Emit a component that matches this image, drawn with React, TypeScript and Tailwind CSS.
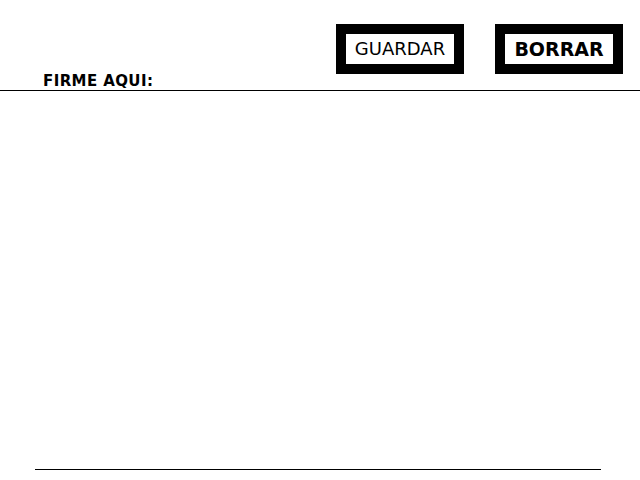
export default function App() {
  return (
    <div className="w-[640px] h-[480px] bg-white flex flex-col overflow-hidden" style={{ fontFamily: '"DejaVu Sans", Verdana, sans-serif' }}>
      <div className="h-[91px] border-b border-black flex flex-col">
        <div className="mt-[24px] flex justify-end gap-[31px] pr-[17px]">
          <button className="w-[128px] h-[50px] border-[10px] border-black bg-white flex items-center justify-center text-[18px] leading-none text-black font-['DejaVu_Sans']">
            GUARDAR
          </button>
          <button className="w-[128px] h-[50px] border-[10px] border-black bg-white flex items-center justify-center text-[19px] leading-none font-bold text-black font-['DejaVu_Sans']">
            BORRAR
          </button>
        </div>
        <div className="pl-[43px] text-[15px] leading-[14px] font-bold tracking-[0.4px] text-black">
          FIRME AQUI:
        </div>
      </div>
      <div className="flex-1" />
      <div className="ml-[35px] w-[566px] h-px bg-black mb-[10px]" />
    </div>
  );
}
